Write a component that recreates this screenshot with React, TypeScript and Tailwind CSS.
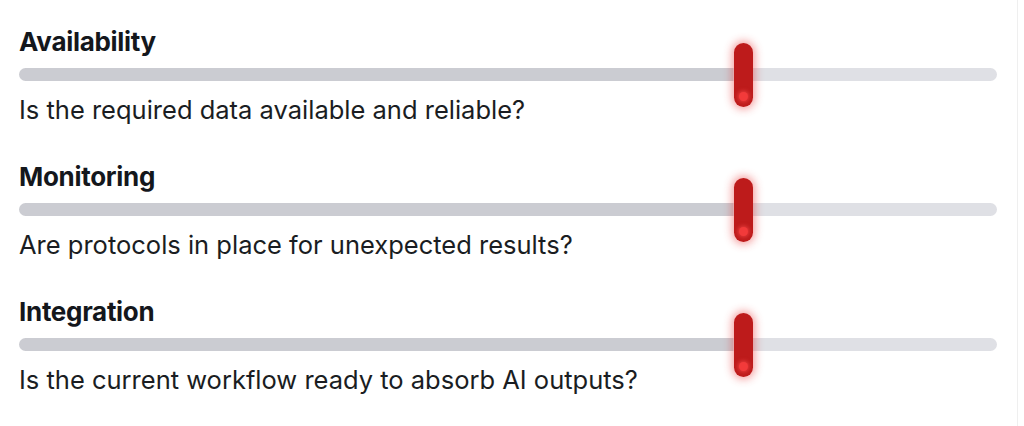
const rows = [
  { title: "Availability", question: "Is the required data available and reliable?" },
  { title: "Monitoring", question: "Are protocols in place for unexpected results?" },
  { title: "Integration", question: "Is the current workflow ready to absorb AI outputs?" },
];

function Slider() {
  return (
    <div className="relative h-[13px] w-full">
      <div className="flex h-full w-full overflow-hidden rounded-full">
        <div className="h-full w-[73%] bg-[#cbccd2]" />
        <div className="h-full flex-1 bg-[#dfe0e5]" />
      </div>
      <div className="absolute left-[715px] top-[-25px] flex h-[64px] w-[19px] items-end justify-center rounded-full bg-[#bd1b1b] pb-[6px] shadow-[0_0_8px_2px_rgba(230,40,40,0.45)]">
        <div className="h-[9px] w-[9px] rounded-full bg-[#f23a3a] shadow-[0_0_4px_1px_rgba(255,80,80,0.7)]" />
      </div>
    </div>
  );
}

export default function App() {
  return (
    <div className="h-[426px] w-[1024px] bg-white font-['Inter',sans-serif] text-[#14171c]">
      <div className="flex h-full w-[1018px] flex-col border-r border-[#efefef] pl-[19px] pr-[20px] pt-[27px]">
        {rows.map((r) => (
          <div key={r.title} className="mb-[37px] flex flex-col">
            <h2 className="text-[26px] font-bold leading-[30px] tracking-[-0.3px]">{r.title}</h2>
            <div className="mt-[11px]">
              <Slider />
            </div>
            <p className="mt-[14px] text-[25.5px] leading-[30px] text-[#1a1d22]">{r.question}</p>
          </div>
        ))}
      </div>
    </div>
  );
}
